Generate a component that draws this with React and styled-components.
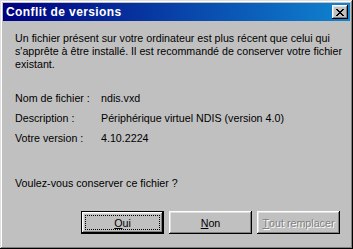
import React from "react";
import styled, { createGlobalStyle } from "styled-components";

const GlobalStyle = createGlobalStyle`
  html, body {
    margin: 0;
    padding: 0;
    background: #c0c0c0;
  }
  body {
    font-family: "Liberation Sans", Arial, sans-serif;
    font-size: 10.7px;
    -webkit-font-smoothing: none;
  }
`;

const info = [
  { label: "Nom de fichier :", value: "ndis.vxd" },
  { label: "Description :", value: "Périphérique virtuel NDIS (version 4.0)" },
  { label: "Votre version :", value: "4.10.2224" },
];

export default function App() {
  return (
    <>
      <GlobalStyle />
      <Window>
        <TitleBar>
          <Title>Conflit de versions</Title>
          <CloseButton aria-label="Fermer">
            <svg width="8" height="7" viewBox="0 0 8 7">
              <path
                d="M0 0h2v1h1v1h2V1h1V0h2v1H7v1H6v1H5v1h1v1h1v1h1v1H6V6H5V5H3v1H2v1H0V6h1V5h1V4h1V3H2V2H1V1H0z"
                fill="#000"
              />
            </svg>
          </CloseButton>
        </TitleBar>
        <Body>
          <Message>
            Un fichier présent sur votre ordinateur est plus récent que celui qui
            <br />
            s'apprête à être installé. Il est recommandé de conserver votre fichier
            <br />
            existant.
          </Message>
          <InfoGrid>
            {info.map((row) => (
              <React.Fragment key={row.label}>
                <span>{row.label}</span>
                <span>{row.value}</span>
              </React.Fragment>
            ))}
          </InfoGrid>
          <Question>Voulez-vous conserver ce fichier ?</Question>
          <ButtonRow>
            <Button $default>
              <FocusRing>
                <u>O</u>ui
              </FocusRing>
            </Button>
            <Button>
              <u>N</u>on
            </Button>
            <Button disabled>
              <u>T</u>out remplacer
            </Button>
          </ButtonRow>
        </Body>
      </Window>
    </>
  );
}

const Window = styled.div`
  width: 353px;
  height: 249px;
  box-sizing: border-box;
  background: #c0c0c0;
  padding: 3px;
  box-shadow: inset -1px -1px #000, inset 1px 1px #dfdfdf,
    inset -2px -2px #808080, inset 2px 2px #fff;
  display: flex;
  flex-direction: column;
`;

const TitleBar = styled.div`
  height: 18px;
  display: flex;
  align-items: center;
  justify-content: space-between;
  padding: 0 2px 0 3px;
  background: linear-gradient(90deg, #000080, #1084d0);
`;

const Title = styled.span`
  color: #fff;
  font-weight: bold;
  font-size: 12px;
  letter-spacing: 0.4px;
`;

const CloseButton = styled.div`
  width: 16px;
  height: 14px;
  box-sizing: border-box;
  background: #c0c0c0;
  display: flex;
  align-items: center;
  justify-content: center;
  box-shadow: inset -1px -1px #000, inset 1px 1px #fff,
    inset -2px -2px #808080, inset 2px 2px #dfdfdf;
`;

const Body = styled.div`
  flex: 1;
  display: flex;
  flex-direction: column;
  padding: 11px 10px 0 12px;
  color: #000;
  line-height: 13px;
`;

const Message = styled.p`
  margin: 0;
  white-space: nowrap;
`;

const InfoGrid = styled.div`
  display: grid;
  grid-template-columns: 86px 1fr;
  row-gap: 7px;
  margin-top: 21px;
`;

const Question = styled.p`
  margin: 32px 0 0;
`;

const ButtonRow = styled.div`
  display: flex;
  justify-content: flex-end;
  gap: 5px;
  margin-top: 21px;
`;

const Button = styled.button`
  width: 83px;
  height: 23px;
  box-sizing: border-box;
  padding: 0;
  border: none;
  background: #c0c0c0;
  font-family: "Liberation Sans", Arial, sans-serif;
  font-size: 10.7px;
  color: #000;
  display: flex;
  align-items: center;
  justify-content: center;
  box-shadow: ${({ $default }) =>
    $default
      ? "inset -1px -1px #000, inset 1px 1px #000, inset -2px -2px #000, inset 2px 2px #fff, inset -3px -3px #808080, inset 3px 3px #dfdfdf"
      : "inset -1px -1px #000, inset 1px 1px #fff, inset -2px -2px #808080, inset 2px 2px #dfdfdf"};

  &:disabled {
    color: #808080;
    text-shadow: 1px 1px #fff;
  }

  u {
    text-underline-offset: 1px;
  }
`;

const FocusRing = styled.span`
  width: 73px;
  height: 13px;
  display: flex;
  align-items: center;
  justify-content: center;
  outline: 1px dotted #000;
`;
